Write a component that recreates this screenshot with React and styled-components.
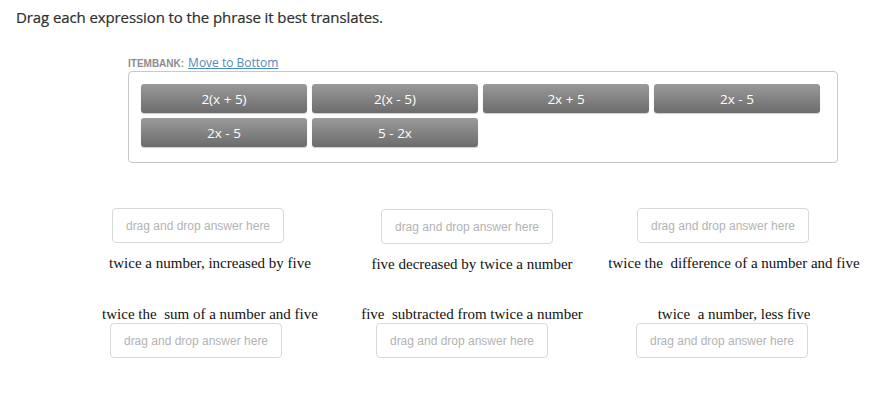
import React from 'react'
import styled, {createGlobalStyle} from 'styled-components'

const Global = createGlobalStyle`
  html, body {
    margin: 0;
    padding: 0;
    background: #ffffff;
  }
`

const Page = styled.div`
  width: 889px;
  height: 402px;
  overflow: hidden;
  font-family: "Open Sans", "Noto Sans", sans-serif;
`

const Prompt = styled.div`
  padding: 6px 0 0 16px;
  height: 22px;
  color: #2e2e2e;
  font-size: 15px;
  line-height: 22px;
  letter-spacing: -0.1px;
  -webkit-text-stroke: 0.2px #2e2e2e;
`

const BankArea = styled.div`
  margin: 27px 0 0 128px;
  width: 710px;
`

const BankLabel = styled.div`
  display: flex;
  align-items: baseline;
  height: 16px;
  line-height: 16px;
  span {
    color: #8c8c8c;
    font-family: "Liberation Sans", Arial, sans-serif;
    font-size: 10px;
    font-weight: 700;
    margin-right: 4px;
  }
  a {
    color: #4f8bb9;
    font-size: 12px;
    text-decoration: underline;
    cursor: pointer;
  }
`

const Bank = styled.div`
  border: 1px solid #c8c8c8;
  border-radius: 4px;
  padding: 12px 15px 15px 12px;
  display: grid;
  grid-template-columns: repeat(4, 166px);
  gap: 5px;
`

const Tile = styled.div`
  height: 29px;
  border-radius: 3px;
  background: linear-gradient(#9a9a9a, #6c6c6c);
  box-shadow: 0 1px 1px rgba(0, 0, 0, 0.2);
  color: #ffffff;
  font-size: 13.5px;
  display: flex;
  align-items: center;
  justify-content: center;
`

const Targets = styled.div`
  margin: 45px 0 0 79px;
  display: grid;
  grid-template-columns: repeat(3, 262px);
  row-gap: 32px;
`

const Cell = styled.div`
  display: flex;
  flex-direction: column;
  align-items: center;
`

const Drop = styled.div`
  width: 170px;
  height: 33px;
  border: 1px solid #d9d9d9;
  border-radius: 4px;
  margin-right: ${p => p.$shift}px;
  margin-top: ${p => p.$top || 0}px;
  color: #b3b3b3;
  font-family: "Liberation Sans", Arial, sans-serif;
  font-size: 12px;
  display: flex;
  align-items: center;
  justify-content: center;
`

const Phrase = styled.div`
  font-family: "Liberation Serif", "Times New Roman", serif;
  font-size: 15px;
  line-height: 18px;
  color: #111111;
  white-space: pre;
  margin-top: ${p => p.$top || 0}px;
`

const tiles = ['2(x + 5)', '2(x - 5)', '2x + 5', '2x - 5', '2x - 5', '5 - 2x']

const top = [
  {text: 'twice a number, increased by five', shift: 24},
  {text: 'five decreased by twice a number', shift: 10, nudge: 1},
  {text: 'twice the  difference of a number and five', shift: 22},
]

const bottom = [
  {text: 'twice the  sum of a number and five', shift: 28},
  {text: 'five  subtracted from twice a number', shift: 20},
  {text: 'twice  a number, less five', shift: 24},
]

const HINT = 'drag and drop answer here'

export default function App() {
  return (
    <Page>
      <Global/>
      <Prompt>Drag each expression to the phrase it best translates.</Prompt>
      <BankArea>
        <BankLabel>
          <span>ITEMBANK:</span>
          <a>Move to Bottom</a>
        </BankLabel>
        <Bank>
          {tiles.map((t, i) => <Tile key={i}>{t}</Tile>)}
        </Bank>
      </BankArea>
      <Targets>
        {top.map((c, i) => (
          <Cell key={'t' + i}>
            <Drop $shift={c.shift} $top={c.nudge}>{HINT}</Drop>
            <Phrase $top={11}>{c.text}</Phrase>
          </Cell>
        ))}
        {bottom.map((c, i) => (
          <Cell key={'b' + i}>
            <Phrase>{c.text}</Phrase>
            <Drop $shift={c.shift}>{HINT}</Drop>
          </Cell>
        ))}
      </Targets>
    </Page>
  )
}
